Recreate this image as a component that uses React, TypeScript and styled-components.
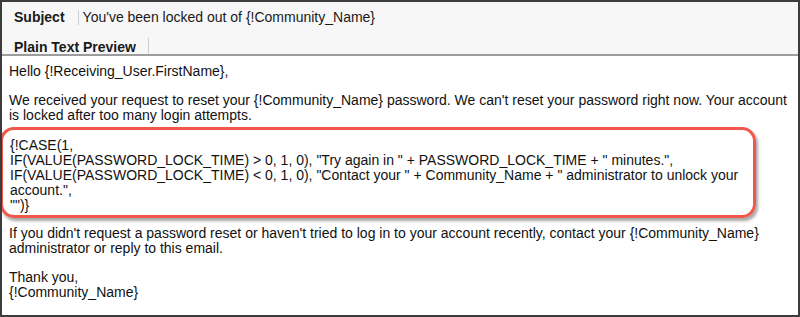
import React from "react";
import styled, { createGlobalStyle } from "styled-components";

const Global = createGlobalStyle`
  html, body { margin: 0; padding: 0; background: #ffffff; }
  body { font-family: "Liberation Sans", Arial, Helvetica, sans-serif; }
`;

const Frame = styled.div`
  box-sizing: border-box;
  width: 800px;
  height: 317px;
  border: 2px solid #3c3c3c;
  background: #ffffff;
  overflow: hidden;
  display: flex;
  flex-direction: column;
`;

const Header = styled.div`
  background: #f7f7f7;
  border-bottom: 2px solid #9c9c9c;
  height: 52px;
  display: flex;
  flex-direction: column;
`;

const HeaderRow = styled.div<{ $h: number; $align: string }>`
  height: ${(p) => p.$h}px;
  display: flex;
  align-items: ${(p) => p.$align};
  padding-left: 12px;
  color: #1a1a1a;
`;

const Label = styled.span`
  font-weight: bold;
  font-size: 14px;
  line-height: 14px;
  color: #1a1a1a;
`;

const Divider = styled.span<{ $h: number; $left: number; $right: number }>`
  width: 1px;
  height: ${(p) => p.$h}px;
  background: #cfcfcf;
  margin: 0 ${(p) => p.$right}px 0 ${(p) => p.$left}px;
  align-self: ${(p) => (p.$h > 15 ? "flex-end" : "center")};
`;

const Value = styled.span`
  font-size: 14px;
  line-height: 16px;
`;

const Body = styled.div`
  padding: 8px 7px 0 7px;
  font-size: 14px;
  line-height: 15px;
  color: #111111;
`;

const Para = styled.p<{ $mt: number }>`
  margin: ${(p) => p.$mt}px 0 0 0;
  white-space: nowrap;
`;

const Highlight = styled.div`
  margin: 4px 35px 0 -9px;
  padding: 8px 7px 2px 7px;
  border: 3px solid #f2574b;
  border-radius: 14px;
  box-shadow: 2px 3px 3px rgba(0, 0, 0, 0.35);
  position: relative;
  white-space: nowrap;
`;

export default function App() {
  return (
    <>
      <Global />
      <Frame>
        <Header>
          <HeaderRow $h={30} $align="center">
            <Label>Subject</Label>
            <Divider $h={15} $left={13} $right={4} />
            <Value>You've been locked out of {"{!Community_Name}"}</Value>
          </HeaderRow>
          <HeaderRow $h={22} $align="flex-end">
            <Label>Plain Text Preview</Label>
            <Divider $h={16} $left={12} $right={0} />
          </HeaderRow>
        </Header>
        <Body>
          <Para $mt={0}>Hello {"{!Receiving_User.FirstName}"},</Para>
          <Para $mt={14}>
            We received your request to reset your {"{!Community_Name}"} password. We can't reset your password right now. Your account
            <br />
            is locked after too many login attempts.
          </Para>
          <Highlight>
            {"{!CASE(1,"}
            <br />
            {'IF(VALUE(PASSWORD_LOCK_TIME) > 0, 1, 0), "Try again in " + PASSWORD_LOCK_TIME + " minutes.",'}
            <br />
            {'IF(VALUE(PASSWORD_LOCK_TIME) < 0, 1, 0), "Contact your " + Community_Name + " administrator to unlock your'}
            <br />
            {'account.",'}
            <br />
            {'"")}'}
          </Highlight>
          <Para $mt={8}>
            If you didn't request a password reset or haven't tried to log in to your account recently, contact your {"{!Community_Name}"}
            <br />
            administrator or reply to this email.
          </Para>
          <Para $mt={14}>
            Thank you,
            <br />
            {"{!Community_Name}"}
          </Para>
        </Body>
      </Frame>
    </>
  );
}
